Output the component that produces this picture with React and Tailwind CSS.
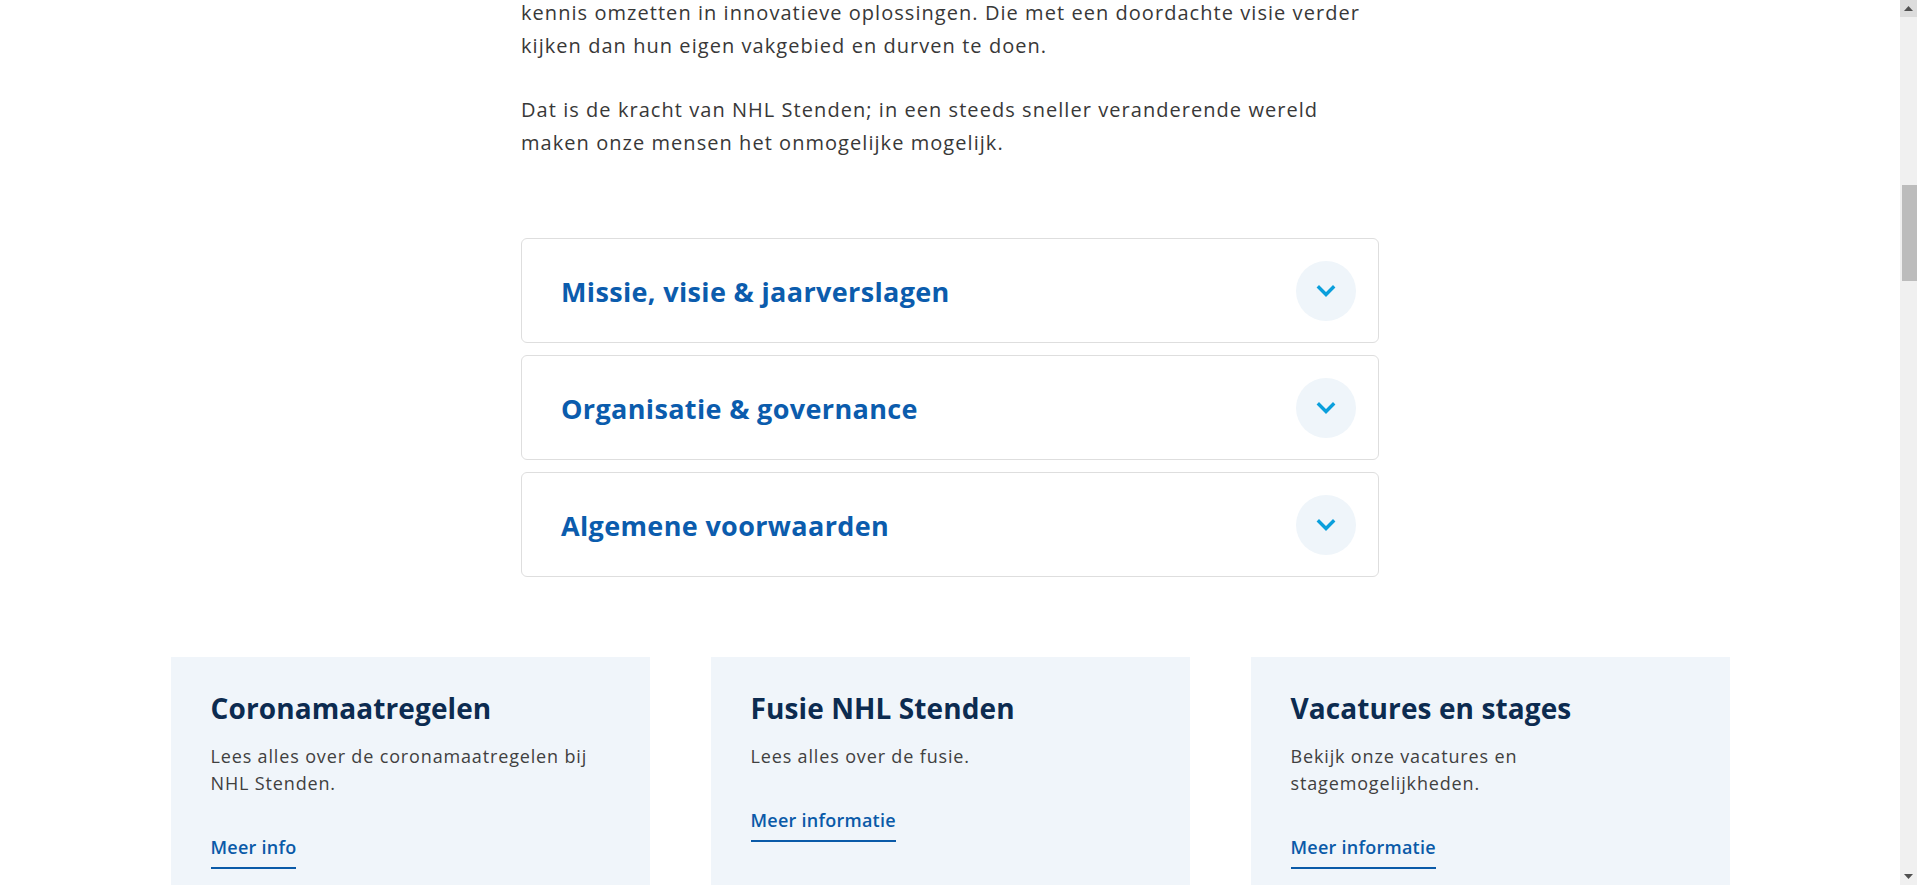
import React from 'react'

const ACCORDION = [
  'Missie, visie & jaarverslagen',
  'Organisatie & governance',
  'Algemene voorwaarden',
]

const CARDS = [
  {
    title: 'Coronamaatregelen',
    text: ['Lees alles over de coronamaatregelen bij', 'NHL Stenden.'],
    link: 'Meer info',
  },
  {
    title: 'Fusie NHL Stenden',
    text: ['Lees alles over de fusie.'],
    link: 'Meer informatie',
  },
  {
    title: 'Vacatures en stages',
    text: ['Bekijk onze vacatures en', 'stagemogelijkheden.'],
    link: 'Meer informatie',
  },
]

const Chevron = () => (
  <svg width="20" height="12" viewBox="0 0 20 12" fill="none">
    <polyline
      points="3,2.5 10,9.5 17,2.5"
      stroke="#0a9fdc"
      strokeWidth="3.4"
      strokeLinecap="square"
      strokeLinejoin="miter"
    />
  </svg>
)

const Scrollbar = () => (
  <div className="w-[17px] h-full bg-[#f0f0f0] flex flex-col items-center">
    <div className="w-full h-[17px] bg-[#dcdcdc] flex items-center justify-center">
      <svg width="9" height="5" viewBox="0 0 9 5">
        <polygon points="0,5 4.5,0 9,5" fill="#505050" />
      </svg>
    </div>
    <div className="mt-[168px] w-[15px] ml-[2px] h-[96px] bg-[#bcbcbc]" />
    <div className="flex-1" />
    <div className="w-full h-[17px] flex items-center justify-center">
      <svg width="9" height="5" viewBox="0 0 9 5">
        <polygon points="0,0 4.5,5 9,0" fill="#505050" />
      </svg>
    </div>
  </div>
)

export default function App() {
  return (
    <div
      className="h-[885px] w-full overflow-hidden flex bg-white"
      style={{ fontFamily: '"Open Sans", Lato, sans-serif' }}
    >
      <main className="flex-1 overflow-hidden">
        {/* Intro text */}
        <div className="w-[858px] mx-auto text-[20px] leading-[33px] text-[#383838] tracking-[1.05px] whitespace-nowrap">
          <p className="-mt-[4px] mb-[31px]">
            kennis omzetten in innovatieve oplossingen. Die met een doordachte visie verder
            <br />
            kijken dan hun eigen vakgebied en durven te doen.
          </p>
          <p>
            Dat is de kracht van NHL Stenden; in een steeds sneller veranderende wereld
            <br />
            maken onze mensen het onmogelijke mogelijk.
          </p>
        </div>

        {/* Accordion */}
        <div className="w-[858px] mx-auto mt-[79px] flex flex-col gap-[12px]">
          {ACCORDION.map((item) => (
            <div
              key={item}
              className="h-[105px] border border-[#dedede] rounded-[6px] flex items-center justify-between pl-[39px] pr-[22px]"
            >
              <h3 className="text-[27px] font-bold text-[#0b5cad] tracking-[0.35px] mt-[4px]">{item}</h3>
              <button className="w-[60px] h-[60px] rounded-full bg-[#eff5fa] flex items-center justify-center">
                <Chevron />
              </button>
            </div>
          ))}
        </div>

        {/* Cards */}
        <div className="mt-[80px] flex justify-center gap-[61px]">
          {CARDS.map((card) => (
            <div key={card.title} className="w-[479px] h-[260px] bg-[#f0f5fa] px-[40px] pt-[33px]">
              <h3 className="text-[28px] leading-[36px] font-bold text-[#0c2b50] tracking-[0.1px]">{card.title}</h3>
              <p className="mt-[17px] text-[18px] leading-[27px] text-[#404040] tracking-[0.85px] whitespace-nowrap">
                {card.text.map((line, i) => (
                  <React.Fragment key={i}>
                    {i > 0 && <br />}
                    {line}
                  </React.Fragment>
                ))}
              </p>
              <a
                href="#"
                className="inline-block mt-[37px] text-[18px] leading-[27px] font-semibold text-[#0a5aa8] tracking-[0.25px] pb-[6px] border-b-2 border-[#0a5aa8]"
              >
                {card.link}
              </a>
            </div>
          ))}
        </div>
      </main>
      <Scrollbar />
    </div>
  )
}
